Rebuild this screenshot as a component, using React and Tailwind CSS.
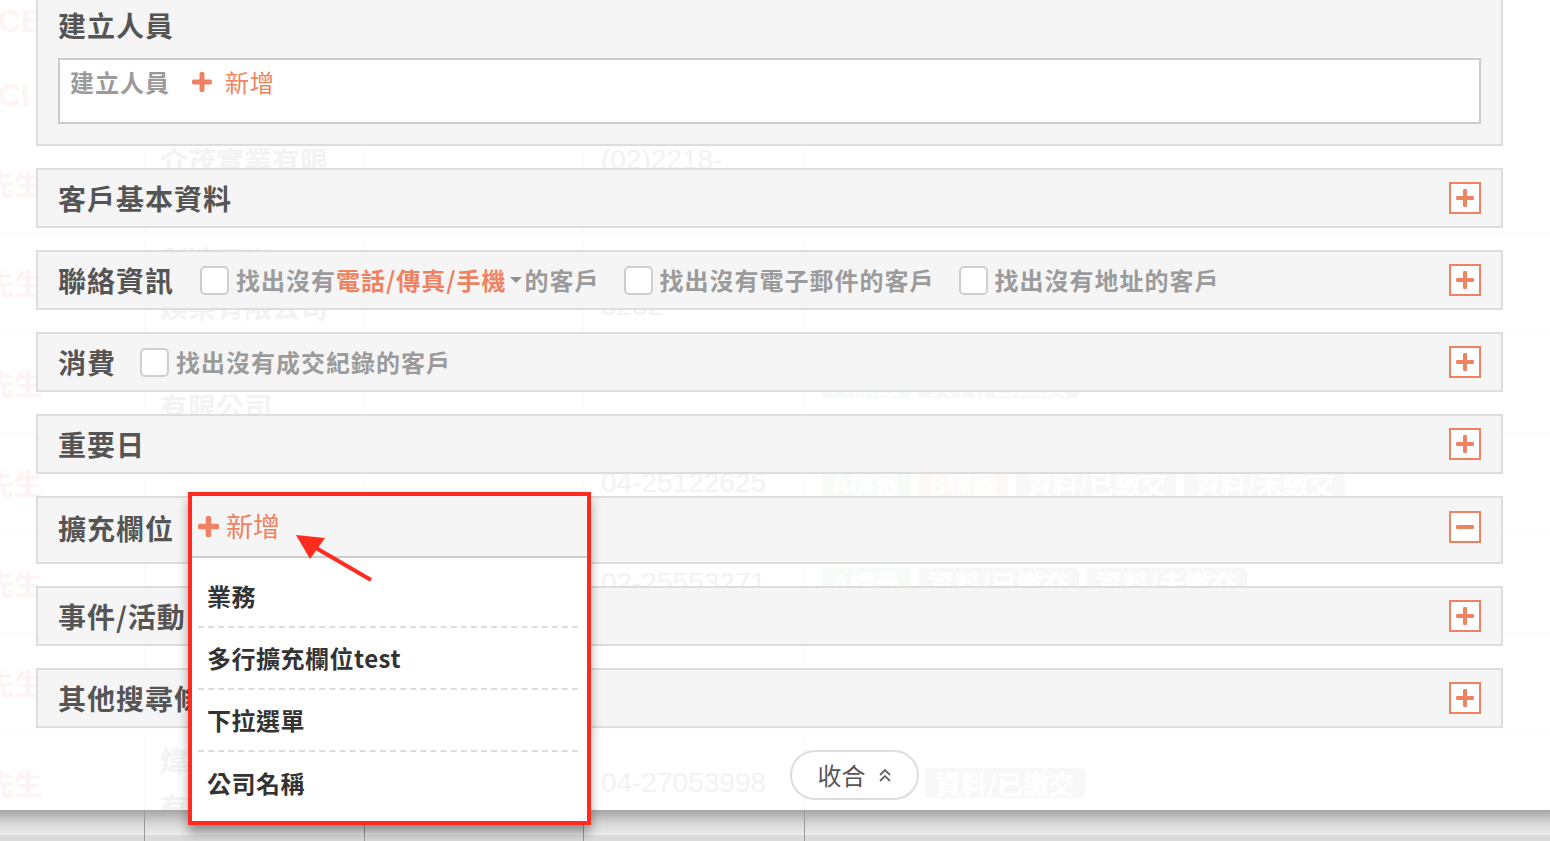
import React from 'react';

const ORANGE = '#ef8361';

const Plus = ({ size = 20, thick = 5 }) => (
    <svg width={size} height={size} viewBox={`0 0 ${size} ${size}`} className="shrink-0">
        <rect x={(size - thick) / 2} y={0} width={thick} height={size} rx={thick / 3} fill={ORANGE} />
        <rect x={0} y={(size - thick) / 2} width={size} height={thick} rx={thick / 3} fill={ORANGE} />
    </svg>
);

const Toggle = ({ open }) => (
    <div className="ml-auto flex h-[32px] w-[32px] shrink-0 items-center justify-center border-2 border-[#ef8361] bg-white">
        {open ? (
            <svg width="18" height="4" viewBox="0 0 18 4">
                <rect width="18" height="4" rx="1.3" fill={ORANGE} />
            </svg>
        ) : (
            <Plus size={18} thick={4} />
        )}
    </div>
);

const Check = ({ children }) => (
    <div className="flex items-center gap-[7px]">
        <span className="h-[29px] w-[29px] shrink-0 rounded-[5px] border-2 border-[#cfcfcf] bg-white" />
        <span className="flex items-center text-[24px] font-bold leading-[34px] tracking-[1px] text-[#9b9b9b]">{children}</span>
    </div>
);

const Title = ({ children }) => (
    <span className="shrink-0 text-[28px] font-bold leading-[34px] tracking-[1px] text-[#555]">{children}</span>
);

const Panel = ({ title, children, open = false }) => (
    <div
        className={`flex border-2 border-[#dddddd] bg-[#f5f5f5] px-[20px] ${open ? 'h-[68px] items-start pt-[13px]' : 'h-[60px] items-center'}`}
    >
        <Title>{title}</Title>
        {children}
        <Toggle open={open} />
    </div>
);

const Tag = ({ children, tone = 'gray' }) => {
    const tones = {
        gray: 'bg-[#f8f8f8]',
        green: 'bg-[#f6fbf8]',
        orange: 'bg-[#fef8f4]',
    };
    return (
        <span className={`rounded-[4px] px-[10px] text-[26px] font-bold leading-[30px] text-white ${tones[tone]}`}>{children}</span>
    );
};

// faint table that lies under the search panel
const ghostRows = [
    { company: ['介茂實業有限', '公司'], phone: ['(02)2218-', '6688'], tags: [] },
    { company: ['利達國際', '娛樂有限公司'], phone: ['0911-', '5252'], tags: [] },
    { company: ['新聯國際', '有限公司'], phone: [], tags: [['A標籤', 'green'], ['資料/已繳交', 'gray']] },
    { company: [], phone: ['04-25122625'], tags: [['A標籤', 'green'], ['B標籤', 'orange'], ['資料/已繳交', 'gray'], ['資料/未繳交', 'gray']] },
    { company: [], phone: ['02-25553271'], tags: [['A標籤', 'green'], ['資料/已繳交', 'gray'], ['資料/未繳交', 'gray']] },
    { company: [], phone: [], tags: [] },
    { company: ['煒達科技', '有限公司'], phone: ['04-27053998'], tags: [['資料/已繳交', 'gray']], tagPad: true },
];

const cols = ['w-[145px]', 'w-[220px]', 'w-[219px]', 'w-[221px]'];

const GhostTable = () => (
    <div className="absolute inset-0 flex flex-col bg-white">
        <div className="flex h-[133px] shrink-0 flex-col pt-[2px] font-['Liberation_Sans',sans-serif] text-[32px] font-bold leading-[38px] text-[#fdf4f4]">
            <span className="-ml-[2px]">CE</span>
            <span className="mt-[36px] -ml-[2px]">CI</span>
        </div>
        {ghostRows.map((row, i) => (
            <div key={i} className="flex h-[100px] shrink-0 border-b border-[#fafafa]">
                <div className="flex w-[145px] shrink-0 items-center border-r border-[#f9f9f9] text-[28px] font-bold text-[#fdf3f3]">
                    <span className="-ml-[14px]">先生</span>
                </div>
                <div className="flex w-[220px] shrink-0 flex-col justify-center border-r border-[#f9f9f9] pl-[15px] text-[28px] font-bold leading-[46px] text-[#f3f3f3]">
                    {row.company.map((c) => (
                        <span key={c}>{c}</span>
                    ))}
                </div>
                <div className="w-[219px] shrink-0 border-r border-[#f9f9f9]" />
                <div className="flex w-[221px] shrink-0 flex-col justify-center border-r border-[#f9f9f9] pl-[17px] font-['Liberation_Sans',sans-serif] text-[28px] leading-[46px] text-[#f2f2f2]">
                    {row.phone.map((p) => (
                        <span key={p}>{p}</span>
                    ))}
                </div>
                <div className={`flex flex-1 items-center gap-[8px] ${row.tagPad ? 'pl-[120px]' : 'pl-[17px]'}`}>
                    {row.tags.map(([t, tone], j) => (
                        <Tag key={j} tone={tone}>{t}</Tag>
                    ))}
                </div>
            </div>
        ))}
        {/* shadow the panel casts on the table below it */}
        <div className="absolute bottom-0 left-0 right-0 flex h-[31px] flex-col">
            <div className="h-[25px] bg-gradient-to-b from-[#a6a6a6] via-[#d4d4d4] to-[#eeeeee]" />
            <div className="h-[6px] bg-[#dadada]" />
            <div className="absolute inset-0 flex">
                {cols.map((c) => (
                    <div key={c} className={`${c} shrink-0 border-r border-[#9a9a9a]`} />
                ))}
            </div>
        </div>
    </div>
);

const dropdownItems = ['業務', '多行擴充欄位test', '下拉選單', '公司名稱'];

export default function App() {
    return (
        <div className="relative h-[841px] w-[1550px] overflow-hidden bg-white font-['Noto_Sans_CJK_TC','Noto_Sans',sans-serif]">
            <GhostTable />

            <div className="relative h-[810px]">
                <div className="ml-[36px] flex w-[1467px] flex-col gap-[22px]">
                    <div className="border-x-2 border-b-2 border-[#dddddd] bg-[#f5f5f5] px-[20px] pb-[20px] pt-[8px]">
                        <Title>建立人員</Title>
                        <div className="mt-[16px] flex h-[66px] items-start border-2 border-[#cccccc] bg-white px-[10px] pt-[5px]">
                            <span className="text-[24px] font-bold leading-[34px] tracking-[1px] text-[#9b9b9b]">建立人員</span>
                            <span className="ml-[22px] flex items-center gap-[13px] text-[24px] leading-[34px] tracking-[1px] text-[#ef8361]">
                                <Plus size={20} thick={5} />
                                新增
                            </span>
                        </div>
                    </div>

                    <Panel title="客戶基本資料" />

                    <Panel title="聯絡資訊">
                        <div className="ml-[26px] flex items-center gap-[24px]">
                            <Check>
                                找出沒有
                                <span className="text-[#ef8361]">電話/傳真/手機</span>
                                <svg width="14" height="8" viewBox="0 0 14 8" className="mx-[2px]">
                                    <path d="M1 1 L13 1 L7 7 Z" fill="#8f8f8f" />
                                </svg>
                                的客戶
                            </Check>
                            <Check>找出沒有電子郵件的客戶</Check>
                            <Check>找出沒有地址的客戶</Check>
                        </div>
                    </Panel>

                    <Panel title="消費">
                        <div className="ml-[24px] flex items-center">
                            <Check>找出沒有成交紀錄的客戶</Check>
                        </div>
                    </Panel>

                    <Panel title="重要日" />

                    <Panel title="擴充欄位" open />

                    <Panel title="事件/活動" />

                    <Panel title="其他搜尋條件" />

                    <button className="ml-[754px] flex h-[50px] w-[129px] items-center justify-center gap-[12px] rounded-full border-2 border-[#dddddd] bg-white text-[24px] leading-none text-[#555]">
                        收合
                        <svg width="14" height="16" viewBox="0 0 14 16">
                            <path d="M2 8 L7 3 L12 8 M2 14 L7 9 L12 14" fill="none" stroke="#666" strokeWidth="1.8" />
                        </svg>
                    </button>
                </div>
            </div>

            {/* dropdown opened from 擴充欄位, highlighted with a red box */}
            <div className="absolute left-[188px] top-[492px] h-[333px] w-[403px] border-4 border-[#fe2c1f] bg-white shadow-[0_8px_10px_rgba(0,0,0,0.35)]">
                <div className="flex h-[62px] items-center gap-[7px] border-b-2 border-[#cccccc] bg-[#f5f5f5] pl-[6px]">
                    <Plus size={21} thick={5.5} />
                    <span className="text-[27px] leading-[34px] text-[#ef8361]">新增</span>
                </div>
                <div className="pl-[6px] pr-[9px] pt-[8px]">
                    {dropdownItems.map((item, i) => (
                        <div
                            key={item}
                            className={`flex h-[62px] items-center pl-[9px] text-[24px] font-bold leading-[34px] tracking-[0.5px] text-[#333] ${i < dropdownItems.length - 1 ? 'border-b-2 border-dashed border-[#dcdcdc]' : ''}`}
                        >
                            {item}
                        </div>
                    ))}
                </div>
            </div>

            <svg className="pointer-events-none absolute left-0 top-0" width="1550" height="841">
                <line x1="371" y1="580" x2="316" y2="548" stroke="#fe2c1f" strokeWidth="4" />
                <polygon points="296,535 325,538 310,559" fill="#fe2c1f" />
            </svg>
        </div>
    );
}
